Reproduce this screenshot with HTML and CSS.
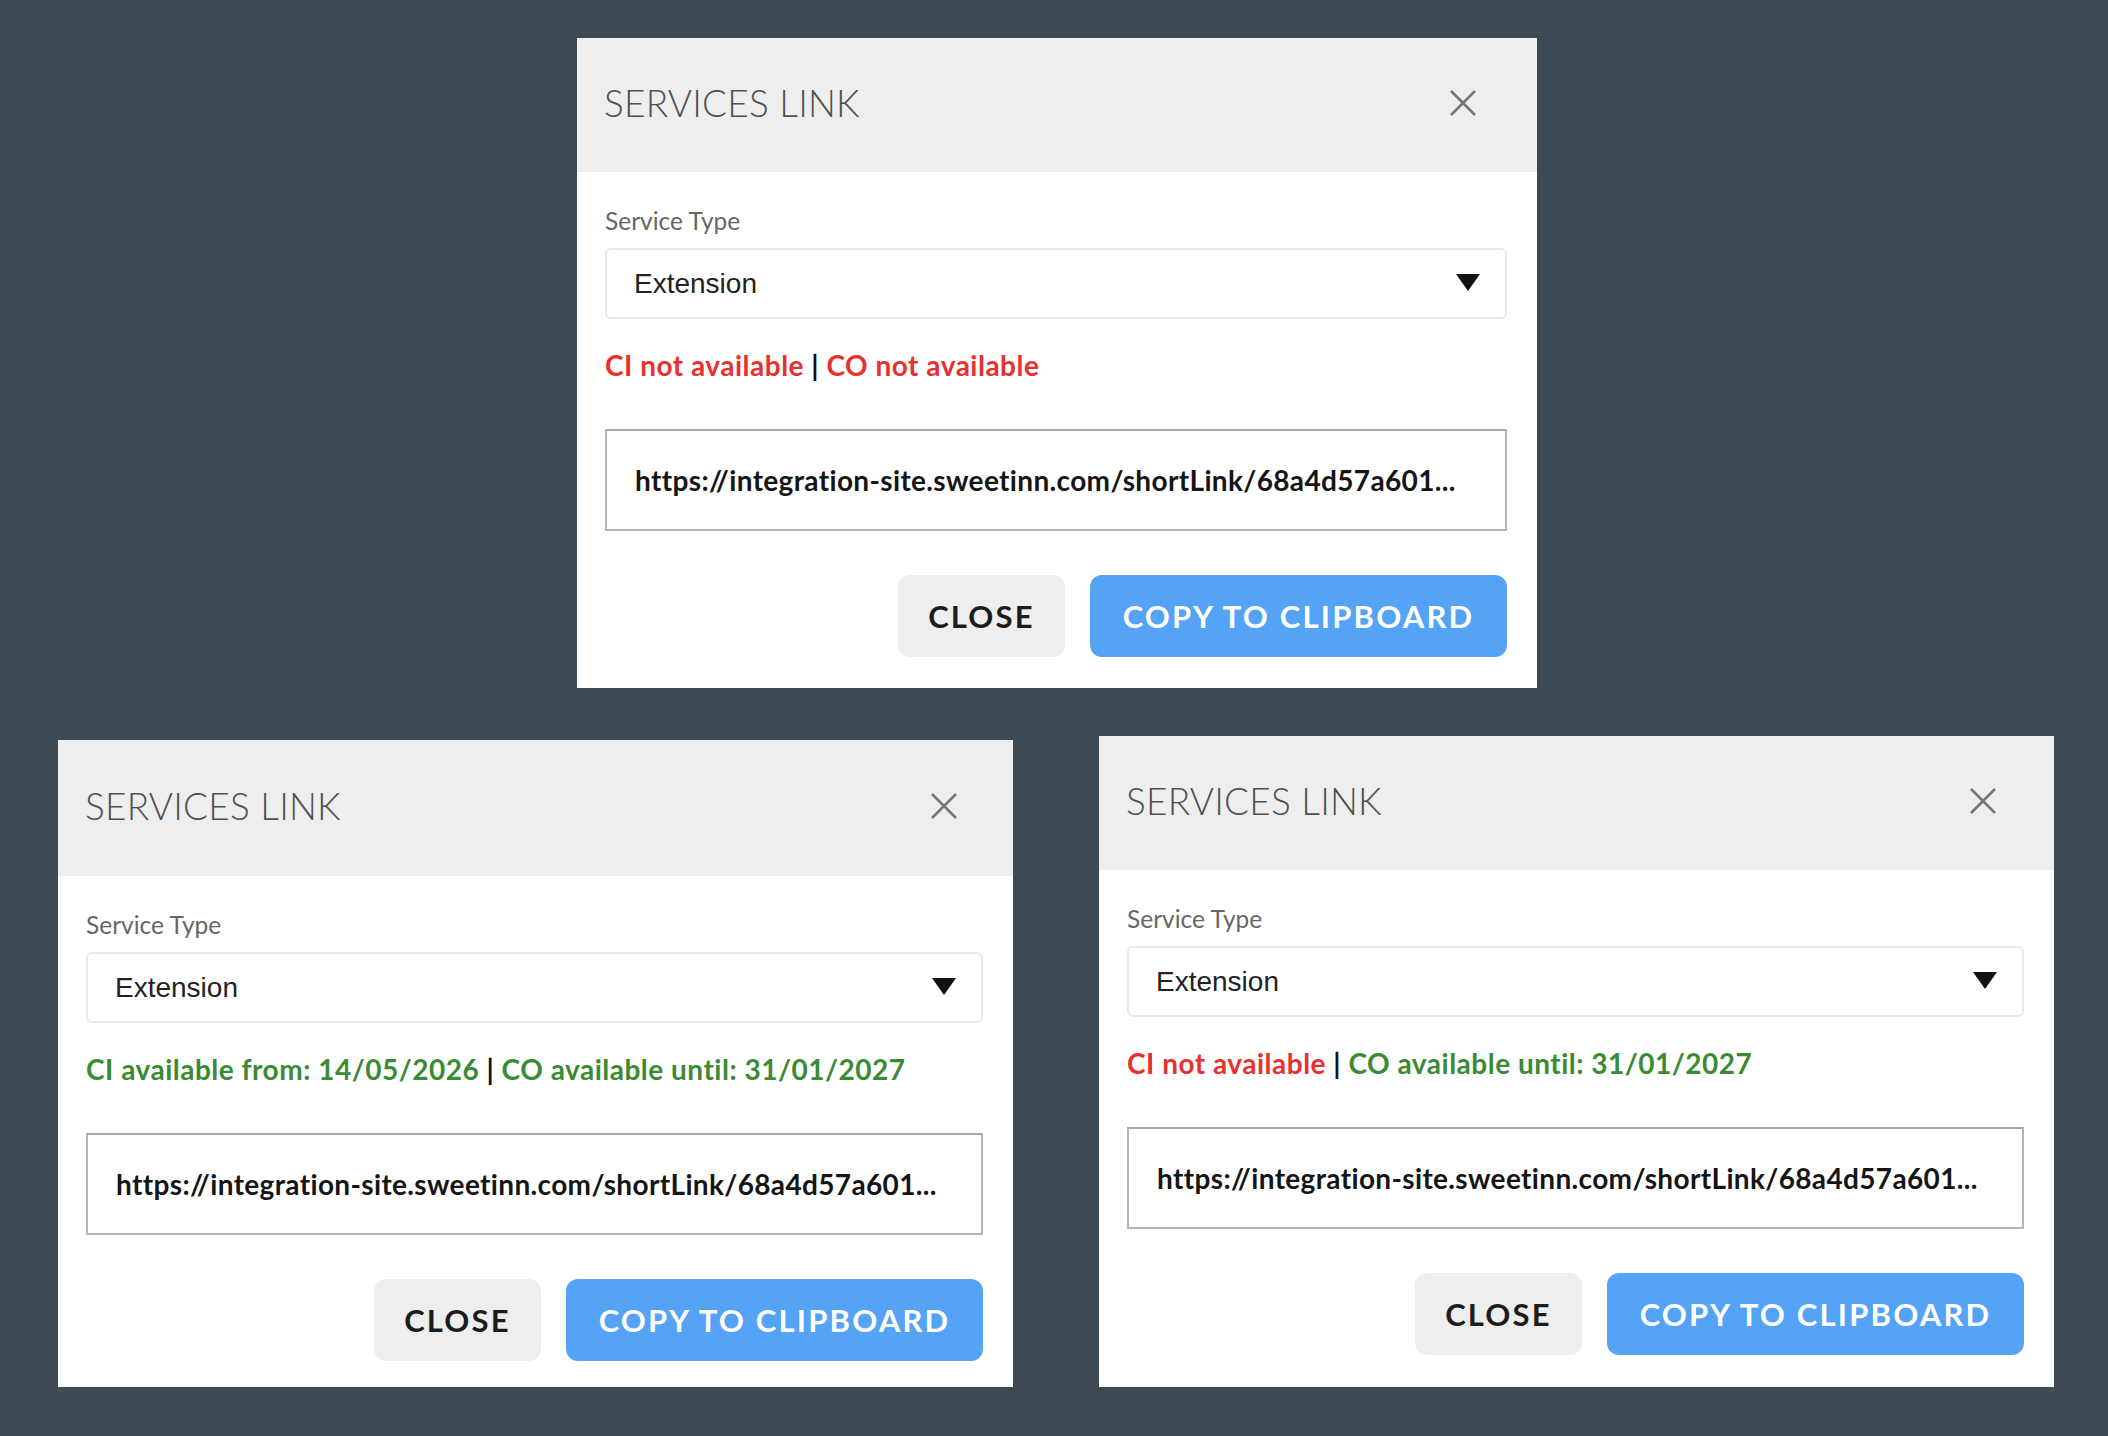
FILE: index.html
```html
<!DOCTYPE html>
<html lang="en">
<head>
<meta charset="UTF-8">
<title>Services Link</title>
<link rel="stylesheet" href="styles.css">
</head>
<body>
	<div class="page">
		<div class="row row-top">
			<div class="dialog">
				<div class="dialog-head">
					<h3>SERVICES LINK</h3>
					<a class="x" href="#"><svg width="28" height="28" viewBox="0 0 28 28"><path d="M2 2L26 26M26 2L2 26" stroke="#757575" stroke-width="2.6" fill="none"/></svg></a>
				</div>
				<div class="dialog-body">
					<label>Service Type</label>
					<div class="select">Extension<i class="caret"></i></div>
					<p class="status"><span class="bad">CI not available</span> <span class="sep">|</span> <span class="bad">CO not available</span></p>
					<div class="link">https://integration-site.sweetinn.com/shortLink/68a4d57a601...</div>
					<div class="btns">
						<a class="btn btn-close" href="#">CLOSE</a>
						<a class="btn btn-copy" href="#">COPY TO CLIPBOARD</a>
					</div>
				</div>
			</div>
		</div>
		<div class="row row-bottom">
			<div class="dialog dialog-low">
				<div class="dialog-head">
					<h3>SERVICES LINK</h3>
					<a class="x" href="#"><svg width="28" height="28" viewBox="0 0 28 28"><path d="M2 2L26 26M26 2L2 26" stroke="#757575" stroke-width="2.6" fill="none"/></svg></a>
				</div>
				<div class="dialog-body">
					<label>Service Type</label>
					<div class="select">Extension<i class="caret"></i></div>
					<p class="status"><span class="good">CI available from: 14/05/2026</span> <span class="sep">|</span> <span class="good">CO available until: 31/01/2027</span></p>
					<div class="link">https://integration-site.sweetinn.com/shortLink/68a4d57a601...</div>
					<div class="btns">
						<a class="btn btn-close" href="#">CLOSE</a>
						<a class="btn btn-copy" href="#">COPY TO CLIPBOARD</a>
					</div>
				</div>
			</div>
			<div class="dialog dialog-narrow">
				<div class="dialog-head">
					<h3>SERVICES LINK</h3>
					<a class="x" href="#"><svg width="28" height="28" viewBox="0 0 28 28"><path d="M2 2L26 26M26 2L2 26" stroke="#757575" stroke-width="2.6" fill="none"/></svg></a>
				</div>
				<div class="dialog-body">
					<label>Service Type</label>
					<div class="select">Extension<i class="caret"></i></div>
					<p class="status"><span class="bad">CI not available</span> <span class="sep">|</span> <span class="good">CO available until: 31/01/2027</span></p>
					<div class="link">https://integration-site.sweetinn.com/shortLink/68a4d57a601...</div>
					<div class="btns">
						<a class="btn btn-close" href="#">CLOSE</a>
						<a class="btn btn-copy" href="#">COPY TO CLIPBOARD</a>
					</div>
				</div>
			</div>
		</div>
	</div>
</body>
</html>
```

FILE: styles.css
```css
body {margin: 0;background-color: #3d4a54;font-family: "Lato", "Open Sans", sans-serif;}
p, h3 {margin: 0;}
a {text-decoration: none;}

.page {padding: 38px 54px 0 58px;display: flex;flex-direction: column;gap: 48px;}
.row {display: flex;}
.row-top {justify-content: center;padding-left: 2px;}
.row-bottom {justify-content: space-between;align-items: flex-start;}

.dialog {width: 960px;background-color: #fff;}
.dialog-low {width: 955px;margin-top: 4px;}
.dialog-narrow {width: 955px;}

.dialog-head {height: 134px;background-color: #eeeeee;display: flex;align-items: center;justify-content: space-between;padding: 0 60px 0 27px;}
.dialog-low .dialog-head {height: 136px;padding-right: 55px;}
.dialog-narrow .dialog-head {padding-right: 57px;}
.dialog-head h3 {font-size: 37px;font-weight: 300;color: #505050;letter-spacing: 0.2px;margin-top: -6px;}
.dialog-head .x {display: block;width: 28px;height: 28px;margin-top: -4px;}
.dialog-head .x svg {display: block;}

.dialog-body {padding: 34px 30px 31px 28px;display: flex;flex-direction: column;}
.dialog-low .dialog-body {padding-bottom: 26px;}
.dialog-narrow .dialog-body {padding-bottom: 32px;}
.dialog-body label {font-size: 24.5px;color: #666;line-height: 29px;}
.select {margin-top: 13px;height: 71px;box-sizing: border-box;border: 2px solid #e9e9e9;border-radius: 6px;display: flex;align-items: center;justify-content: space-between;padding: 0 25px 0 27px;font-family: "Liberation Sans", Arial, sans-serif;font-size: 28px;color: #222;}
.caret {width: 0;height: 0;border-left: 12px solid transparent;border-right: 12px solid transparent;border-top: 17px solid #111;margin-top: -3px;}

.status {margin-top: 31px;font-size: 28px;font-weight: 700;line-height: 30px;letter-spacing: 0.5px;color: #111;}
.status .bad {color: #e8312f;}
.status .good {color: #3b8a34;}

.link {margin-top: 49px;height: 102px;box-sizing: border-box;border: 2px solid #b5b5b5;border-top-color: #a8a8a8;display: flex;align-items: center;padding: 0 28px;font-size: 28px;font-weight: 700;letter-spacing: 0.35px;color: #151515;white-space: nowrap;overflow: hidden;}

.btns {margin-top: 44px;display: flex;justify-content: flex-end;gap: 25px;}
.btn {height: 82px;border-radius: 12px;display: flex;align-items: center;justify-content: center;font-size: 31px;font-weight: 700;letter-spacing: 2.2px;}
.btn-close {width: 167px;background-color: #eeeeee;color: #1c1c1c;}
.btn-copy {width: 417px;background-color: #55a3f6;color: #fff;}
```
